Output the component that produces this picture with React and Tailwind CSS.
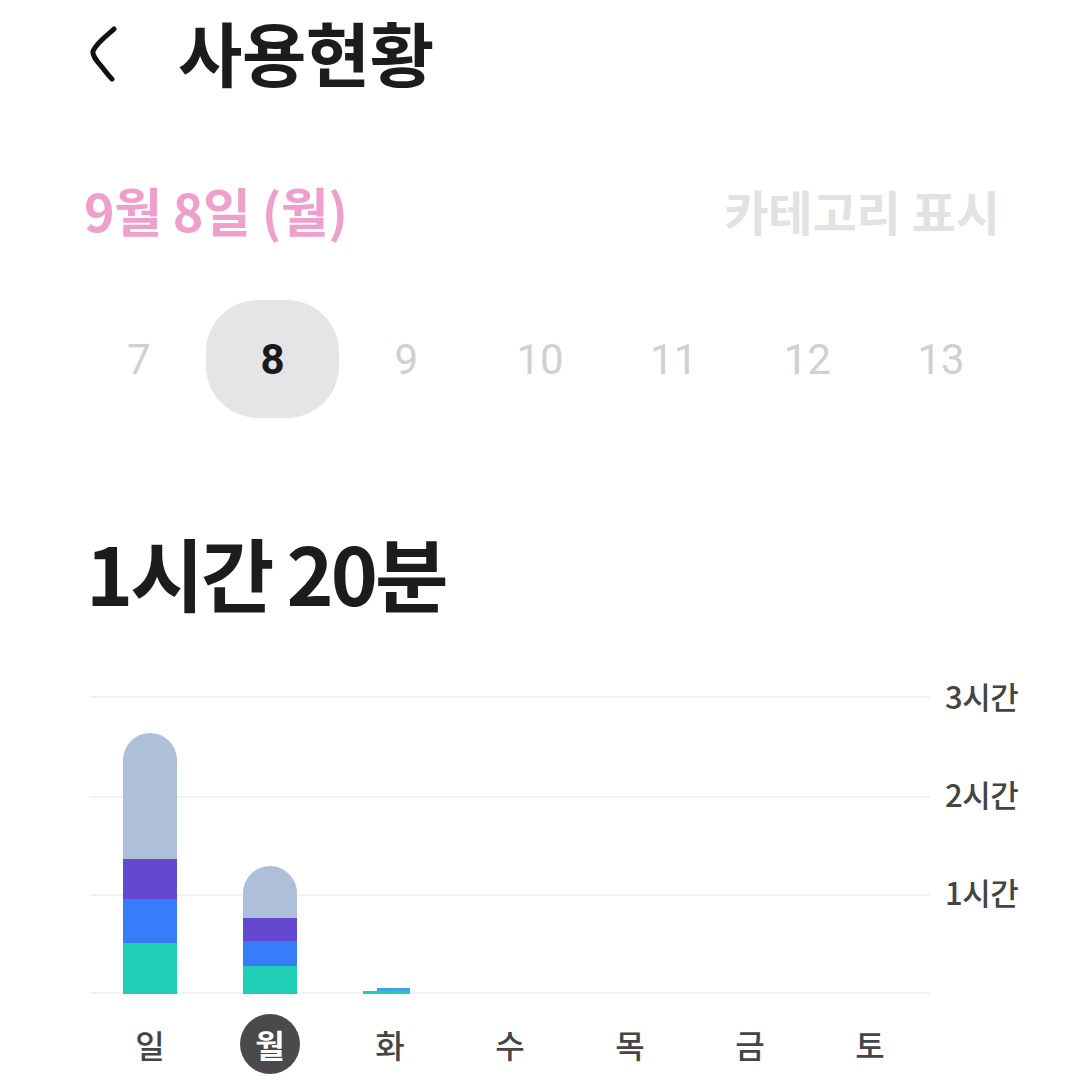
const days = ["7", "8", "9", "10", "11", "12", "13"];
const weekdays = ["일", "월", "화", "수", "목", "금", "토"];

// heights in px, top to bottom: other, purple, blue, teal
const bars = [
  [126, 40, 44, 51],
  [52, 23, 25, 28],
  null,
  null,
  null,
  null,
  null,
];

const BackIcon = () => (
  <svg width="34" height="60" viewBox="0 0 34 60" fill="none">
    <path
      d="M30 7 C25 12 14 19 9 29 C8 34 13 39 18 45 C21 49 24 53 28 57"
      stroke="#111"
      strokeWidth="5"
      strokeLinecap="round"
      strokeLinejoin="round"
    />
  </svg>
);

const Bar = ({ seg }) => (
  <div className="w-[54px] flex flex-col rounded-t-full overflow-hidden">
    <div className="bg-[#aebfd9]" style={{ height: seg[0] }} />
    <div className="bg-[#6249cf]" style={{ height: seg[1] }} />
    <div className="bg-[#377df9]" style={{ height: seg[2] }} />
    <div className="bg-[#1ecfb6]" style={{ height: seg[3] }} />
  </div>
);

export default function App() {
  return (
    <div className="w-[1080px] h-[1080px] bg-white overflow-hidden font-['Noto_Sans_CJK_KR','Noto_Sans',sans-serif]">
      {/* header */}
      <div className="flex items-center h-[112px] pl-[84px] pb-[8px]">
        <BackIcon />
        <h1 className="ml-[60px] text-[70px] leading-none font-bold text-[#1c1c1c] tracking-[-0.5px]">
          사용현황
        </h1>
      </div>

      {/* date + category toggle */}
      <div className="flex items-center justify-between pl-[84px] pr-[80px] mt-[72px]">
        <span className="text-[52px] leading-none font-bold text-[#ee9fcb] tracking-[-0.5px]">
          9월 8일 (월)
        </span>
        <span className="text-[48px] leading-none font-bold text-[#e2e2e2]">
          카테고리 표시
        </span>
      </div>

      {/* day picker */}
      <div className="grid grid-cols-7 px-[72px] mt-[64px]">
        {days.map((d) => (
          <div key={d} className="flex justify-center">
            {d === "8" ? (
              <div className="w-[133px] h-[118px] rounded-[52px] bg-[#e5e5e7] flex items-center justify-center font-['Roboto',sans-serif] text-[42px] font-bold text-[#1a1a1a]">
                {d}
              </div>
            ) : (
              <div className="w-[133px] h-[118px] flex items-center justify-center font-['Roboto',sans-serif] text-[42px] text-[#d0d0d0]">
                {d}
              </div>
            )}
          </div>
        ))}
      </div>

      {/* total */}
      <div className="pl-[86px] mt-[113px] text-[80px] leading-none font-bold text-[#1c1c1c] tracking-[-3px]">
        1시간 20분
      </div>

      {/* chart */}
      <div className="flex mt-[85px]">
        <div className="relative ml-[90px] w-[840px] h-[298px]">
          <div className="absolute inset-0 flex flex-col">
            <div className="h-[100px] border-t-2 border-[#f2f2f2]" />
            <div className="h-[98px] border-t-2 border-[#f2f2f2]" />
            <div className="h-[100px] border-t-2 border-[#f2f2f2] border-b-2" />
          </div>
          <div className="relative grid grid-cols-7 h-full items-end">
            {bars.map((seg, i) => (
              <div key={i} className="flex justify-center">
                {seg ? (
                  <Bar seg={seg} />
                ) : i === 2 ? (
                  <div className="w-[47px] h-[6px] flex items-end -ml-[8px]">
                    <div className="w-[14px] h-[3px] bg-[#1ecfb6]" />
                    <div className="flex-1 h-[6px] bg-[#3aa8e6] border-b-[3px] border-[#1ecfb6]" />
                  </div>
                ) : null}
              </div>
            ))}
          </div>
        </div>
        <div className="ml-[15px] -mt-[20px] flex flex-col gap-[58px] text-[31px] leading-[40px] font-medium text-[#444] tracking-[-0.5px]">
          <span>3시간</span>
          <span>2시간</span>
          <span>1시간</span>
        </div>
      </div>

      {/* weekday labels */}
      <div className="grid grid-cols-7 ml-[90px] w-[840px] mt-[20px]">
        {weekdays.map((w) => (
          <div key={w} className="flex justify-center">
            {w === "월" ? (
              <div className="w-[60px] h-[60px] rounded-full bg-[#4a4a4a] flex items-center justify-center text-[32px] font-bold text-white">
                {w}
              </div>
            ) : (
              <div className="h-[60px] flex items-center text-[32px] font-medium text-[#454545]">
                {w}
              </div>
            )}
          </div>
        ))}
      </div>
    </div>
  );
}
